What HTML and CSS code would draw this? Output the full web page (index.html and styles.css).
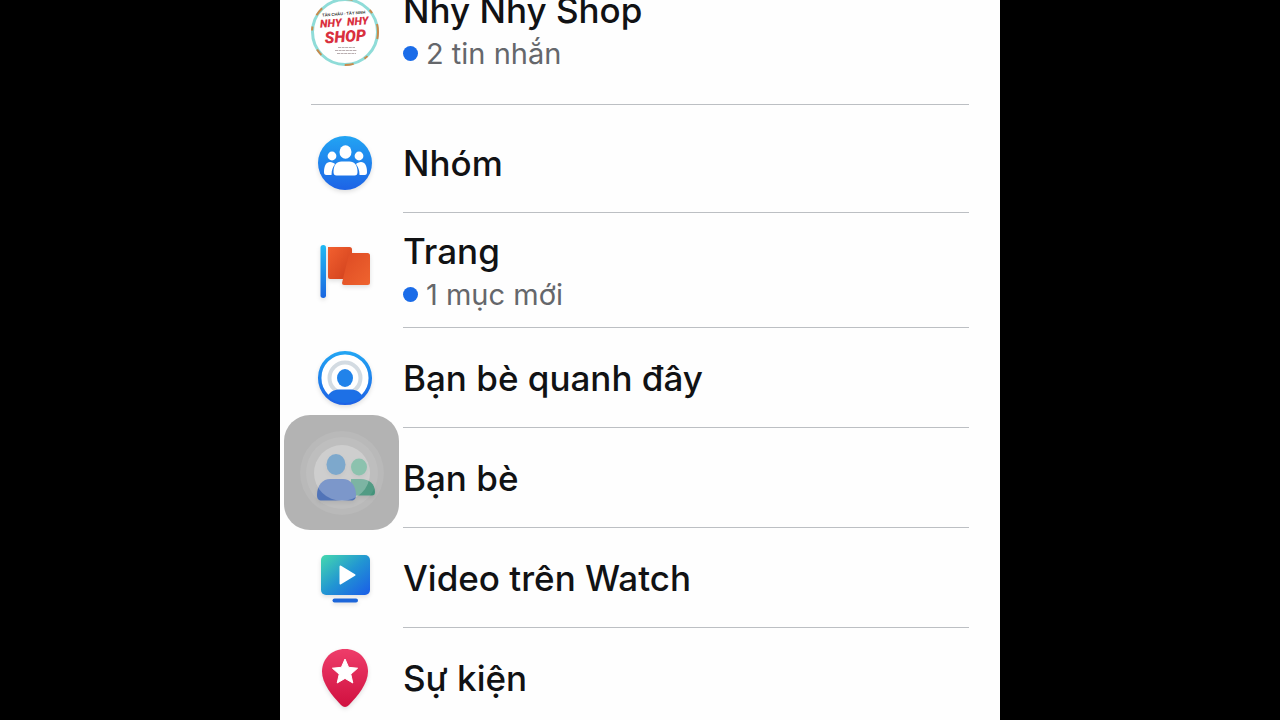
FILE: index.html
```
<!DOCTYPE html>
<html lang="vi">
<head>
    <meta charset="UTF-8">
    <meta name="viewport" content="width=device-width, initial-scale=1.0">
    <title>Menu</title>
    <link rel="stylesheet" href="styles.css">
</head>
<body>
    <main class="screen">
        <nav class="menu">
            <a class="item item-shop" href="#shop">
                <svg class="icon" viewBox="0 0 68 68" aria-hidden="true">
                    <circle cx="34" cy="34" r="32.500" fill="#fff" stroke="#8fdcd8" stroke-width="3"/>
                    <circle cx="34" cy="34" r="33" fill="none" stroke="#c98a4b" stroke-width="2" stroke-dasharray="7 20 4 12 9 26"/>
                    <g transform="rotate(-4 34 34)" text-anchor="middle">
                        <text class="shop-small" x="34" y="17">TÂN CHÂU - TÂY NINH</text>
                        <text class="shop-nhy" x="34" y="28">NHY&#160; NHY</text>
                        <text class="shop-name" x="34" y="44">SHOP</text>
                    </g>
                    <path d="M27 49.500h17M24 52.500h22M26 55.500h19" stroke="#b9aeb0" stroke-width="1" stroke-dasharray="3 .6"/>
                </svg>
                <div class="text">
                    <span class="title">Nhy Nhy Shop</span>
                    <span class="note">2 tin nhắn</span>
                </div>
            </a>

            <hr class="divider">

            <a class="item" href="#groups">
                <svg class="icon" viewBox="0 0 68 68" aria-hidden="true">
                    <defs>
                        <linearGradient id="blue" x1="0" y1="0" x2="0" y2="1">
                            <stop offset="0" stop-color="#22a4f3"/>
                            <stop offset="1" stop-color="#1d63e6"/>
                        </linearGradient>
                    </defs>
                    <circle cx="34" cy="34" r="27" fill="url(#blue)"/>
                    <g fill="#fff">
                        <circle cx="21" cy="27" r="4.400"/>
                        <circle cx="48" cy="27" r="4.400"/>
                        <path d="M13 43c0-6 2-10 6-10 2 0 4 1 5 2-2 3-3.500 6-3.500 11H15.500c-2 0-2.500-1-2.500-3z"/>
                        <path d="M56 43c0-6-2-10-6-10-2 0-4 1-5 2 2 3 3.500 6 3.500 11h5c2 0 2.500-1 2.500-3z"/>
                        <ellipse cx="34.500" cy="23" rx="6" ry="6.700"/>
                        <path d="M22.500 43c0-7 3-10.500 8-10.500h8c5 0 8 3.500 8 10.500 0 2.500-1 3.500-3 3.500h-18c-2 0-3-1-3-3.500z"/>
                    </g>
                </svg>
                <div class="text">
                    <span class="title">Nhóm</span>
                </div>
            </a>

            <a class="item item-tall" href="#pages">
                <svg class="icon" viewBox="0 0 68 68" aria-hidden="true">
                    <defs>
                        <linearGradient id="pole" x1="0" y1="0" x2="0" y2="1">
                            <stop offset="0" stop-color="#20b9f3"/>
                            <stop offset="1" stop-color="#1a66e0"/>
                        </linearGradient>
                        <linearGradient id="flag" x1="0" y1="0" x2="1" y2="1">
                            <stop offset="0" stop-color="#f2602f"/>
                            <stop offset="1" stop-color="#cf3f1c"/>
                        </linearGradient>
                        <linearGradient id="flag-front" x1="0" y1="0" x2="1" y2="1">
                            <stop offset="0" stop-color="#dd4a23"/>
                            <stop offset="1" stop-color="#ef642f"/>
                        </linearGradient>
                    </defs>
                    <rect x="9.500" y="8" width="5.500" height="53" rx="2.700" fill="url(#pole)"/>
                    <path d="M17 10h21.500q2.500 0 2.500 2.500V42H19q-2 0-2-2z" fill="url(#flag)"/>
                    <path d="M41 16h15.500q2.500 0 2.500 2.500v27q0 2.500-2.500 2.500H33q-2 0-2-2l6-25q1-5 4-5z" fill="url(#flag-front)"/>
                </svg>
                <div class="text">
                    <span class="title">Trang</span>
                    <span class="note">1 mục mới</span>
                </div>
            </a>

            <a class="item" href="#nearby">
                <svg class="icon" viewBox="0 0 68 68" aria-hidden="true">
                    <clipPath id="nearby-clip"><circle cx="34" cy="34" r="25"/></clipPath>
                    <circle cx="34" cy="34" r="25.300" fill="#fff" stroke="url(#blue)" stroke-width="3.500"/>
                    <circle cx="34" cy="34" r="15.500" fill="none" stroke="#d3dbe2" stroke-width="4"/>
                    <ellipse cx="34" cy="34" rx="8" ry="9" fill="#2183ea"/>
                    <path clip-path="url(#nearby-clip)" d="M14 62c0-10 6-16.500 14-16.500h12c8 0 14 6.500 14 16.500z" fill="#1d70e6"/>
                </svg>
                <div class="text">
                    <span class="title">Bạn bè quanh đây</span>
                </div>
            </a>

            <a class="item" href="#friends">
                <svg class="icon" viewBox="0 0 68 68" aria-hidden="true">
                    <ellipse cx="48" cy="23" rx="8" ry="8.500" fill="#3ddca2"/>
                    <path d="M40 35h10c8 0 14 5 14 13 0 2.500-1 3.500-3 3.500H40z" fill="#12b280"/>
                    <ellipse cx="25" cy="20.500" rx="9.500" ry="10.500" fill="#1590f8"/>
                    <path d="M6 51c0-10 6-16 13-16h13c7 0 13 6 13 16 0 4-2 5.500-4.500 5.500h-30C7.500 56.500 6 55 6 51z" fill="#145ef0"/>
                </svg>
                <div class="text">
                    <span class="title">Bạn bè</span>
                </div>
            </a>

            <a class="item" href="#watch">
                <svg class="icon" viewBox="0 0 68 68" aria-hidden="true">
                    <defs>
                        <linearGradient id="tv" x1="0" y1="0" x2="1" y2="1">
                            <stop offset="0" stop-color="#45d9ae"/>
                            <stop offset=".5" stop-color="#2296d2"/>
                            <stop offset="1" stop-color="#1a5ce8"/>
                        </linearGradient>
                    </defs>
                    <rect x="10" y="11" width="49" height="40" rx="5" fill="url(#tv)"/>
                    <path d="M29.500 22.500l14 8.500-14 8.500z" fill="#fff" stroke="#fff" stroke-width="2" stroke-linejoin="round"/>
                    <rect x="21.500" y="54.500" width="25.500" height="4" rx="2" fill="#1c66da"/>
                </svg>
                <div class="text">
                    <span class="title">Video trên Watch</span>
                </div>
            </a>

            <a class="item" href="#events">
                <svg class="icon" viewBox="0 0 68 68" aria-hidden="true">
                    <defs>
                        <linearGradient id="pin" x1="0" y1="0" x2="0" y2="1">
                            <stop offset="0" stop-color="#ee3d6a"/>
                            <stop offset="1" stop-color="#d0103f"/>
                        </linearGradient>
                    </defs>
                    <path d="M34 5c13.500 0 23 10 23 22.500 0 12-10 24-19 33.500q-4 4-8 0C21 51.500 11 39.500 11 27.500 11 15 20.500 5 34 5z" fill="url(#pin)"/>
                    <path d="M34 15l3.600 8.300 9 .9-6.800 6 2 8.800-7.800-4.600-7.800 4.600 2-8.800-6.800-6 9-.9z" fill="#fff" stroke="#fff" stroke-width="1" stroke-linejoin="round"/>
                </svg>
                <div class="text">
                    <span class="title">Sự kiện</span>
                </div>
            </a>
        </nav>

        <button class="touch" type="button" aria-label="AssistiveTouch">
            <span class="ring ring-outer"><span class="ring ring-middle"><span class="ring ring-inner"></span></span></span>
        </button>
    </main>
</body>
</html>
```
FILE: styles.css
```
body {
    margin: 0;
    background: #000;
    font-family: Inter, Roboto, sans-serif;
}
.screen {
    position: relative;
    max-width: 720px;
    height: 100vh;
    margin: 0 auto;
    background: #fefefe;
    overflow: hidden;
}
/* the list is scrolled a little past its first row */
.menu {
    margin-top: -26px;
    padding: 0 31px;
}
.item {
    display: flex;
    align-items: center;
    gap: 24px;
    height: 100px;
    color: #111214;
    text-decoration: none;
}
.item-shop,
.item-tall {
    height: 115px;
}
.icon {
    flex: none;
    width: 68px;
    height: 68px;
    filter: drop-shadow(0 2px 2px rgba(0, 0, 0, 0.12));
}
.item-shop .icon {
    filter: none;
}
.text {
    flex: 1;
    display: flex;
    flex-direction: column;
    justify-content: center;
    box-sizing: border-box;
    height: 100%;
    border-bottom: 1px solid #bcbfc3;
}
.item-shop .text {
    border-bottom: 0;
}
.item-tall .text {
    padding-top: 5px;
}
.title {
    font-size: 35px;
    font-weight: 500;
    line-height: 44px;
}
.note {
    display: flex;
    align-items: center;
    gap: 8px;
    color: #65676b;
    font-size: 29px;
    line-height: 44px;
}
.note::before {
    content: "";
    width: 15px;
    height: 15px;
    border-radius: 50%;
    background: #1b6ce8;
}
.divider {
    height: 1px;
    margin: 15px 0 8px;
    border: 0;
    background: #bcbfc3;
}
.shop-small {
    font: bold 4px "Liberation Sans", sans-serif;
    fill: #333;
}
.shop-nhy,
.shop-name {
    font-family: Roboto, sans-serif;
    font-style: italic;
    font-weight: 900;
    fill: #d9303e;
}
.shop-nhy {
    font-size: 11px;
}
.shop-name {
    font-size: 16px;
}
.touch {
    position: absolute;
    top: 415px;
    left: 4px;
    display: flex;
    align-items: center;
    justify-content: center;
    width: 115px;
    height: 115px;
    padding: 0;
    border: 0;
    border-radius: 26px;
    background: rgba(92, 92, 92, 0.46);
}
.ring {
    display: flex;
    align-items: center;
    justify-content: center;
    border-radius: 50%;
}
.ring-outer {
    width: 84px;
    height: 84px;
    background: rgba(255, 255, 255, 0.08);
}
.ring-middle {
    width: 72px;
    height: 72px;
    background: rgba(255, 255, 255, 0.08);
}
.ring-inner {
    width: 56px;
    height: 56px;
    background: rgba(255, 255, 255, 0.25);
}
```
